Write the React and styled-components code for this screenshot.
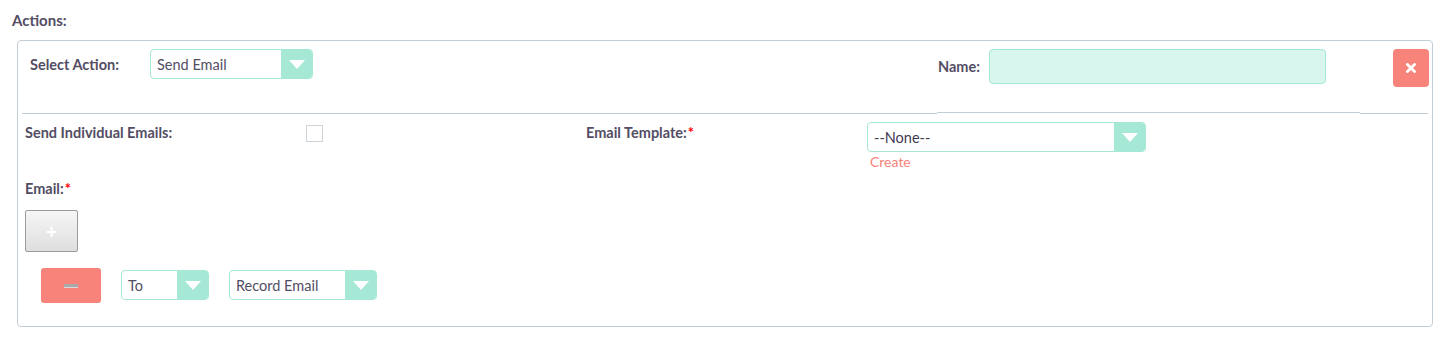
import React from 'react';
import styled, { createGlobalStyle } from 'styled-components';

const GlobalStyle = createGlobalStyle`
	body {
		margin: 0;
		background: #ffffff;
		font-family: 'Lato', 'Open Sans', sans-serif;
		color: #534d64;
	}
`;

const Page = styled.div`
	width: 1455px;
	height: 340px;
	padding: 12px 0 0 12px;
	box-sizing: border-box;
`;

const Heading = styled.div`
	font-size: 15px;
	font-weight: 700;
	line-height: 16px;
	margin-bottom: 12px;
`;

const Panel = styled.div`
	width: 1416px;
	height: 287px;
	margin-left: 5px;
	box-sizing: border-box;
	border: 1px solid #c3cdd4;
	border-radius: 4px;
`;

const TopRow = styled.div`
	display: flex;
	align-items: flex-start;
	height: 71px;
	padding: 8px 3px 0 12px;
	box-sizing: border-box;
`;

const Label = styled.div`
	font-size: 14.5px;
	font-weight: 700;
	line-height: 16px;
	white-space: nowrap;
	width: ${props => props.width || 'auto'};
	margin-top: ${props => props.top || '0px'};
	margin-right: ${props => props.gap || '0px'};
`;

const Required = styled.span`
	color: #ff0000;
	margin-left: 1px;
`;

const SelectBox = styled.div`
	display: flex;
	width: ${props => props.width};
	height: ${props => props.height || '30px'};
	margin-top: ${props => props.top || '0px'};
	box-sizing: border-box;
	border: 1px solid #a5e8d6;
	border-radius: 4px;
	overflow: hidden;
	background: #ffffff;
`;

const SelectText = styled.div`
	flex: 1;
	padding-left: 6px;
	font-size: 14.5px;
	line-height: 29px;
	color: ${props => props.dark ? '#3f3b52' : '#534d64'};
	white-space: nowrap;
`;

const Arrow = styled.div`
	width: 31px;
	background: #a5e8d6;
	display: flex;
	align-items: center;
	justify-content: center;

	&::after {
		content: '';
		border-left: 8px solid transparent;
		border-right: 8px solid transparent;
		border-top: 9px solid #ffffff;
	}
`;

const Spacer = styled.div`
	flex: 1;
`;

const NameInput = styled.div`
	width: 337px;
	height: 35px;
	box-sizing: border-box;
	background: #d8f5ee;
	border: 1px solid #a5e8d6;
	border-radius: 4px;
	margin-right: 67px;
`;

const CloseButton = styled.button`
	width: 36px;
	height: 38px;
	padding: 0;
	border: none;
	border-radius: 4px;
	background: #f7837a;
	display: flex;
	align-items: center;
	justify-content: center;
`;

const Divider = styled.div`
	display: flex;
	align-items: flex-start;
	height: 2px;
	margin: 0 4px;
`;

const Segment = styled.div`
	width: ${props => props.width};
	flex: ${props => props.grow ? 1 : 'none'};
	border-top: 1px solid #c3cdd4;
	margin-top: ${props => props.raised ? '0px' : '1px'};
`;

const FieldGrid = styled.div`
	display: grid;
	grid-template-columns: 281px 280px 281px 1fr;
	padding: 8px 0 0 7px;
	height: 67px;
	box-sizing: border-box;
`;

const Cell = styled.div`
	display: flex;
	flex-direction: column;
	align-items: flex-start;
`;

const Checkbox = styled.div`
	width: 17px;
	height: 17px;
	margin-top: 3px;
	box-sizing: border-box;
	border: 1px solid #ccd4da;
`;

const CreateLink = styled.a`
	font-size: 14px;
	line-height: 16px;
	color: #f7837a;
	margin: 2px 0 0 3px;
	text-decoration: none;
`;

const EmailSection = styled.div`
	padding: 0 0 0 7px;
`;

const PlusButton = styled.button`
	width: 53px;
	height: 42px;
	margin-top: 13px;
	padding: 0;
	border: 1px solid #9c9c9c;
	border-radius: 2px;
	background: linear-gradient(#f6f6f6, #dedede);
	color: #ffffff;
	font-family: 'Lato', sans-serif;
	font-size: 20px;
	font-weight: 700;
	line-height: 1;
`;

const RecipientRow = styled.div`
	display: flex;
	align-items: flex-start;
	gap: 20px;
	margin: 16px 0 0 16px;
`;

const MinusButton = styled.button`
	width: 60px;
	height: 35px;
	padding: 0;
	border: none;
	border-radius: 3px;
	background: #f7837a;
	display: flex;
	align-items: center;
	justify-content: center;

	&::after {
		content: '';
		width: 14px;
		height: 3px;
		background: #a9a9a9;
		border-bottom: 1px solid #d9d9d9;
	}
`;

function Select({ value, width, height, top, dark }) {
	return (
		<SelectBox width={width} height={height} top={top}>
			<SelectText dark={dark}>{value}</SelectText>
			<Arrow />
		</SelectBox>
	);
}

export default function App() {
	return (
		<Page>
			<GlobalStyle />
			<Heading>Actions:</Heading>
			<Panel>
				<TopRow>
					<Label width="120px" top="8px">Select Action:</Label>
					<Select value="Send Email" width="163px" />
					<Spacer />
					<Label top="10px" gap="9px">Name:</Label>
					<NameInput />
					<CloseButton>
						<svg width="10" height="10" viewBox="0 0 10 10">
							<path d="M1.5 1.5 L8.5 8.5 M8.5 1.5 L1.5 8.5" stroke="#ffffff" strokeWidth="2.8" strokeLinecap="square" />
						</svg>
					</CloseButton>
				</TopRow>
				<Divider>
					<Segment width="915px" />
					<Segment width="423px" raised />
					<Segment grow />
				</Divider>
				<FieldGrid>
					<Cell>
						<Label top="3px">Send Individual Emails:</Label>
					</Cell>
					<Cell>
						<Checkbox />
					</Cell>
					<Cell>
						<Label top="3px">Email Template:<Required>*</Required></Label>
					</Cell>
					<Cell>
						<Select value="--None--" width="279px" dark />
						<CreateLink href="#">Create</CreateLink>
					</Cell>
				</FieldGrid>
				<EmailSection>
					<Label>Email:<Required>*</Required></Label>
					<PlusButton>+</PlusButton>
					<RecipientRow>
						<MinusButton />
						<Select value="To" width="88px" top="2px" />
						<Select value="Record Email" width="148px" top="2px" />
					</RecipientRow>
				</EmailSection>
			</Panel>
		</Page>
	);
}
